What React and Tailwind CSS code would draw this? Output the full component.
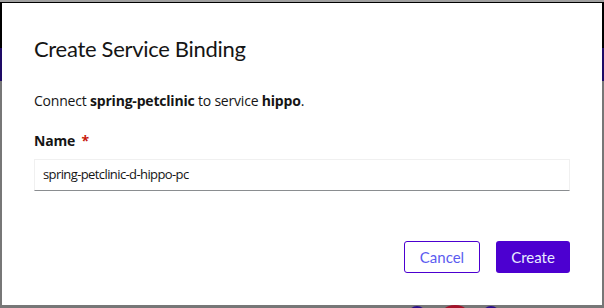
import React from 'react'

export default function App() {
  return (
    <div className="relative w-[604px] h-[308px] overflow-hidden bg-[#777777]">
      {/* page behind the backdrop */}
      <div className="flex flex-col">
        <div className="h-[2px] bg-[#a0a0a0]" />
        <div className="h-[46px] bg-black" />
        <div className="h-[33px] bg-[#1e0a66]" />
        <div className="flex-1" />
      </div>
      <div className="absolute left-[408px] top-[306px] w-[18px] h-[18px] rounded-full bg-[#2a0e8a]" />
      <div className="absolute left-[437px] top-[305px] w-[36px] h-[36px] rounded-full bg-[#a3132a]" />
      <div className="absolute left-[482px] top-[306px] w-[18px] h-[18px] rounded-full bg-[#2a0e8a]" />

      {/* modal */}
      <div className="absolute left-[2px] top-[3px] w-[600px] h-[302px] bg-white flex flex-col px-8 pt-[31px] pb-8 font-['Lato',sans-serif] text-[#151515]">
        <h1 className="text-[22px] leading-[30px] font-normal tracking-[-0.3px]">Create Service Binding</h1>
        <p className="mt-[27px] text-[14px] leading-[20px] font-['Open_Sans',sans-serif] tracking-[-0.2px]">
          Connect <span className="font-bold">spring-petclinic</span> to service <span className="font-bold">hippo</span>.
        </p>
        <label className="mt-[20px] text-[14px] leading-[20px] font-bold font-['Open_Sans',sans-serif] tracking-[-0.2px]">
          Name <span className="text-[#c9190b] ml-[3px]">*</span>
        </label>
        <div className="mt-[8px] h-[32px] w-[536px] border border-[#f0f0f0] border-b-[#8a8d90] flex items-center px-[8px] text-[13px] font-['Open_Sans',sans-serif] tracking-[-0.6px] text-[#151515]">
          spring-petclinic-d-hippo-pc
        </div>
        <div className="mt-auto flex justify-end gap-4">
          <button className="w-[76px] h-[32px] rounded-[3px] border border-[#4c00d0] text-[#5b5cf0] text-[15px] bg-white">Cancel</button>
          <button className="w-[74px] h-[32px] rounded-[3px] bg-[#4c00d0] text-[#e8ecff] text-[15px]">Create</button>
        </div>
      </div>
    </div>
  )
}
